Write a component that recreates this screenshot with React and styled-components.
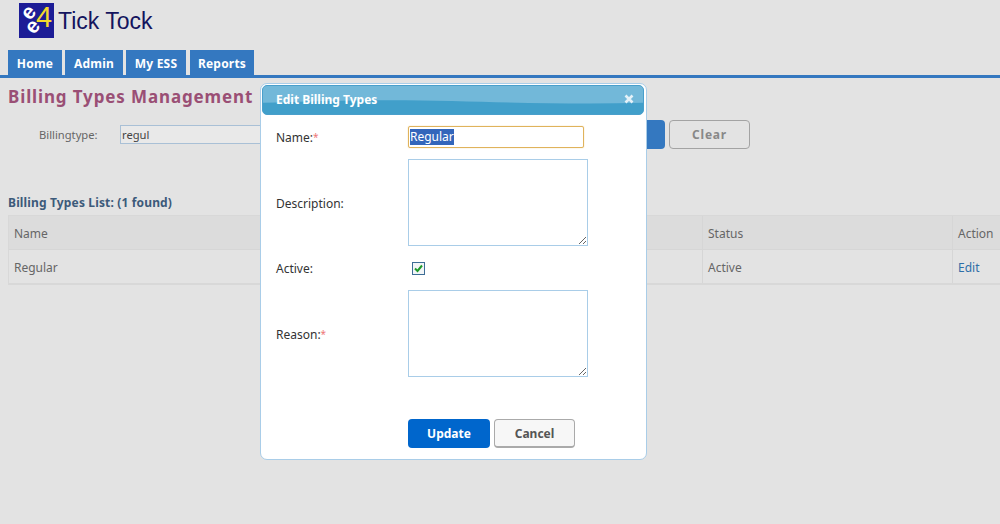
import React from "react";
import styled, { createGlobalStyle } from "styled-components";

const Global = createGlobalStyle`
  html, body { margin: 0; padding: 0; background: #e3e3e3; }
  body { font-family: "Noto Sans", Tahoma, sans-serif; font-size: 12px; color: #555; overflow: hidden; }
  #root { width: 1000px; height: 524px; overflow: hidden; position: relative; }
`;

const Page = styled.div`
  width: 1000px; height: 524px; background: #e3e3e3; display: flex; flex-direction: column;
`;
const Header = styled.header`
  height: 50px; padding: 3px 0 0 19px; box-sizing: border-box; display: flex; align-items: flex-start; gap: 4px;
`;
const BrandName = styled.span`
  font-family: "Liberation Sans", Arial, sans-serif; font-size: 23px; line-height: 36px; color: #14145e;
`;
const Nav = styled.nav`
  display: flex; gap: 3px; padding-left: 8px; border-bottom: 3px solid #3478c0; height: 25px;
`;
const Tab = styled.a`
  width: ${p => p.$w}px; margin-right: ${p => p.$mr || 0}px; background: #3478c0; color: #fff; font-weight: bold; font-size: 12px;
  letter-spacing: 0.2px; padding-top: 1px; box-sizing: border-box;
  display: flex; align-items: center; justify-content: center;
`;
const Title = styled.h1`
  margin: 9px 0 0 8px; font-size: 17px; line-height: 20px; font-weight: bold; letter-spacing: 0.87px; color: #9a4f75;
`;
const SearchRow = styled.div`
  display: flex; align-items: center; margin-top: 13px; height: 29px; padding-left: 39px;
`;
const SearchLabel = styled.label`
  width: 81px; font-size: 11.2px; color: #666;
`;
const SearchInput = styled.div`
  width: 445px; height: 19px; box-sizing: border-box; border: 1px solid #a9c0d6; background: #e9e9e9;
  padding-left: 1px; line-height: 17px; font-size: 11.2px; color: #444;
`;
const SearchButton = styled.button`
  width: 100px; height: 29px; margin-left: 0; border: 0; border-radius: 4px; background: #3478c0; color: #fff; font: bold 12px "Noto Sans", sans-serif;
`;
const ClearButton = styled.button`
  width: 81px; height: 29px; margin-left: 4px; border: 1px solid #a3a3a3; border-radius: 4px; background: #e3e3e3; color: #888;
  font: bold 12px "Noto Sans", sans-serif; letter-spacing: 0.8px;
`;
const ListTitle = styled.h2`
  margin: 46px 0 0 8px; font-size: 12px; line-height: 16px; font-weight: bold; letter-spacing: 0.15px; color: #3c5a7a;
`;
const Table = styled.div`
  margin: 4px 0 0 8px; border: 2px solid #d8d8d8; border-right: 0; border-width: 1px 0 2px 1px; width: 992px; box-sizing: border-box;
`;
const TRow = styled.div`
  display: grid; grid-template-columns: 693px 250px 1fr; height: ${p => p.$h}px; background: ${p => p.$head ? "#dcdcdc" : "#e3e3e3"};
  border-bottom: ${p => p.$head ? "1px solid #d6d6d6" : "0"}; box-sizing: border-box;
`;
const TCell = styled.div`
  display: flex; align-items: center; padding: 2px 0 0 5px; font-size: 12px; color: #666;
  & + & { border-left: 1px solid #d6d6d6; }
`;
const EditLink = styled.a`
  color: #2f6ea8;
`;
const Modal = styled.div`
  position: absolute; left: 260px; top: 83px; width: 387px; height: 377px; box-sizing: border-box; background: #fff;
  border: 1px solid #a9cde8; border-radius: 7px; padding: 1px 2px 0 1px; display: flex; flex-direction: column;
`;
const ModalHead = styled.div`
  position: relative; height: 30px; flex: none; box-sizing: border-box; border-radius: 5px; overflow: hidden; background: #419fca;
  border: 1px solid #4a9fcb; display: flex; align-items: center; justify-content: space-between; padding: 0 9px 0 13px;
`;
const Wave = styled.svg`
  position: absolute; inset: 0; width: 100%; height: 100%;
`;
const ModalTitle = styled.span`
  position: relative; top: -1px; color: #fff; font-weight: bold; font-size: 12px;
`;
const CloseIcon = styled.svg`
  position: relative; width: 10px; height: 10px; top: -1px;
`;
const Form = styled.div`
  display: grid; grid-template-columns: 132px 1fr; padding: 11px 0 0 14px; align-items: center;
`;
const FieldLabel = styled.label`
  font-size: 12px; color: #333; margin-top: ${p => p.$mt || 0}px;
`;
const Req = styled.span`
  color: #ee7777; font-size: 10px; position: relative; top: -1px;
`;
const NameInput = styled.div`
  width: 176px; height: 22px; box-sizing: border-box; border: 1px solid #e0b35c; border-radius: 2px; padding: 2px 1px;
  box-shadow: 0 0 1px #e0b35c; font-size: 12px; line-height: 16px; color: #333;
`;
const Selected = styled.span`
  background: #3366bb; color: #fff; display: inline-block; height: 16px;
`;
const Area = styled.textarea`
  display: block; width: 180px; height: 87px; box-sizing: border-box; margin: ${p => p.$mt || 0}px 0 0; border: 1px solid #a9cde8; outline: 0; background: #fff;
`;
const CheckRow = styled.div`
  height: 44px; display: flex; align-items: center; padding-left: 4px;
`;
const CheckBox = styled.span`
  width: 13px; height: 13px; box-sizing: border-box; border: 1px solid #3d6d96; background: #f2f5f7; display: flex; align-items: center; justify-content: center;
`;
const Buttons = styled.div`
  display: flex; gap: 4px; margin: 42px 0 0 146px;
`;
const UpdateButton = styled.button`
  width: 82px; height: 29px; border: 0; border-radius: 4px; background: #0066cc; color: #fff; font: bold 12px "Noto Sans", sans-serif;
`;
const CancelButton = styled.button`
  width: 81px; height: 29px; box-sizing: border-box; border: 1px solid #aaa; border-bottom-width: 2px; border-radius: 4px; background: #f7f7f7; color: #555; font: bold 12px "Noto Sans", sans-serif;
`;

const Logo = () => (
  <svg width="35" height="35" viewBox="0 0 35 35">
    <rect width="35" height="35" fill="#1c1c96" />
    <text transform="translate(10 10) rotate(-50)" y="6" textAnchor="middle" fontFamily="Liberation Sans, sans-serif" fontWeight="bold" fontSize="21" fill="#fff">e</text>
    <text transform="translate(14 24) rotate(-50)" y="6" textAnchor="middle" fontFamily="Liberation Sans, sans-serif" fontWeight="bold" fontSize="21" fill="#fff">e</text>
    <text x="17" y="24" fontFamily="Liberation Sans, sans-serif" fontSize="29" fill="#f4d92c">4</text>
  </svg>
);

export default function App() {
  return (
    <Page>
      <Global />
      <Header>
        <Logo />
        <BrandName>Tick Tock</BrandName>
      </Header>
      <Nav>
        <Tab $w={54}>Home</Tab>
        <Tab $w={58}>Admin</Tab>
        <Tab $w={60} $mr={1}>My ESS</Tab>
        <Tab $w={64}>Reports</Tab>
      </Nav>
      <Title>Billing Types Management</Title>
      <SearchRow>
        <SearchLabel>Billingtype:</SearchLabel>
        <SearchInput>regul</SearchInput>
        <SearchButton>Search</SearchButton>
        <ClearButton>Clear</ClearButton>
      </SearchRow>
      <ListTitle>Billing Types List: (1 found)</ListTitle>
      <Table>
        <TRow $head $h={34}>
          <TCell>Name</TCell><TCell>Status</TCell><TCell>Action</TCell>
        </TRow>
        <TRow $h={33}>
          <TCell>Regular</TCell><TCell>Active</TCell><TCell><EditLink>Edit</EditLink></TCell>
        </TRow>
      </Table>
      <Modal>
        <ModalHead>
          <Wave viewBox="0 0 382 30" preserveAspectRatio="none">
            <path d="M0 18 C50 16 120 14 190 16 C260 18 320 20 382 18 L382 0 L0 0 Z" fill="#72b8d9" />
          </Wave>
          <ModalTitle>Edit Billing Types</ModalTitle>
          <CloseIcon viewBox="0 0 10 10">
            <path d="M1.5 1.5 L8.5 8.5 M8.5 1.5 L1.5 8.5" stroke="#e4f1f8" strokeWidth="2.6" />
          </CloseIcon>
        </ModalHead>
        <Form>
          <FieldLabel>Name:<Req>*</Req></FieldLabel>
          <NameInput><Selected>Regular</Selected></NameInput>
          <FieldLabel $mt={13}>Description:</FieldLabel>
          <Area $mt={11} />
          <FieldLabel>Active:</FieldLabel>
          <CheckRow>
            <CheckBox>
              <svg width="11" height="11" viewBox="0 0 11 11">
                <path d="M2 5.5 L4.5 8 L9 2.5" fill="none" stroke="#1e9a2a" strokeWidth="2" />
              </svg>
            </CheckBox>
          </CheckRow>
          <FieldLabel $mt={2}>Reason:<Req>*</Req></FieldLabel>
          <Area />
        </Form>
        <Buttons>
          <UpdateButton>Update</UpdateButton>
          <CancelButton>Cancel</CancelButton>
        </Buttons>
      </Modal>
    </Page>
  );
}
